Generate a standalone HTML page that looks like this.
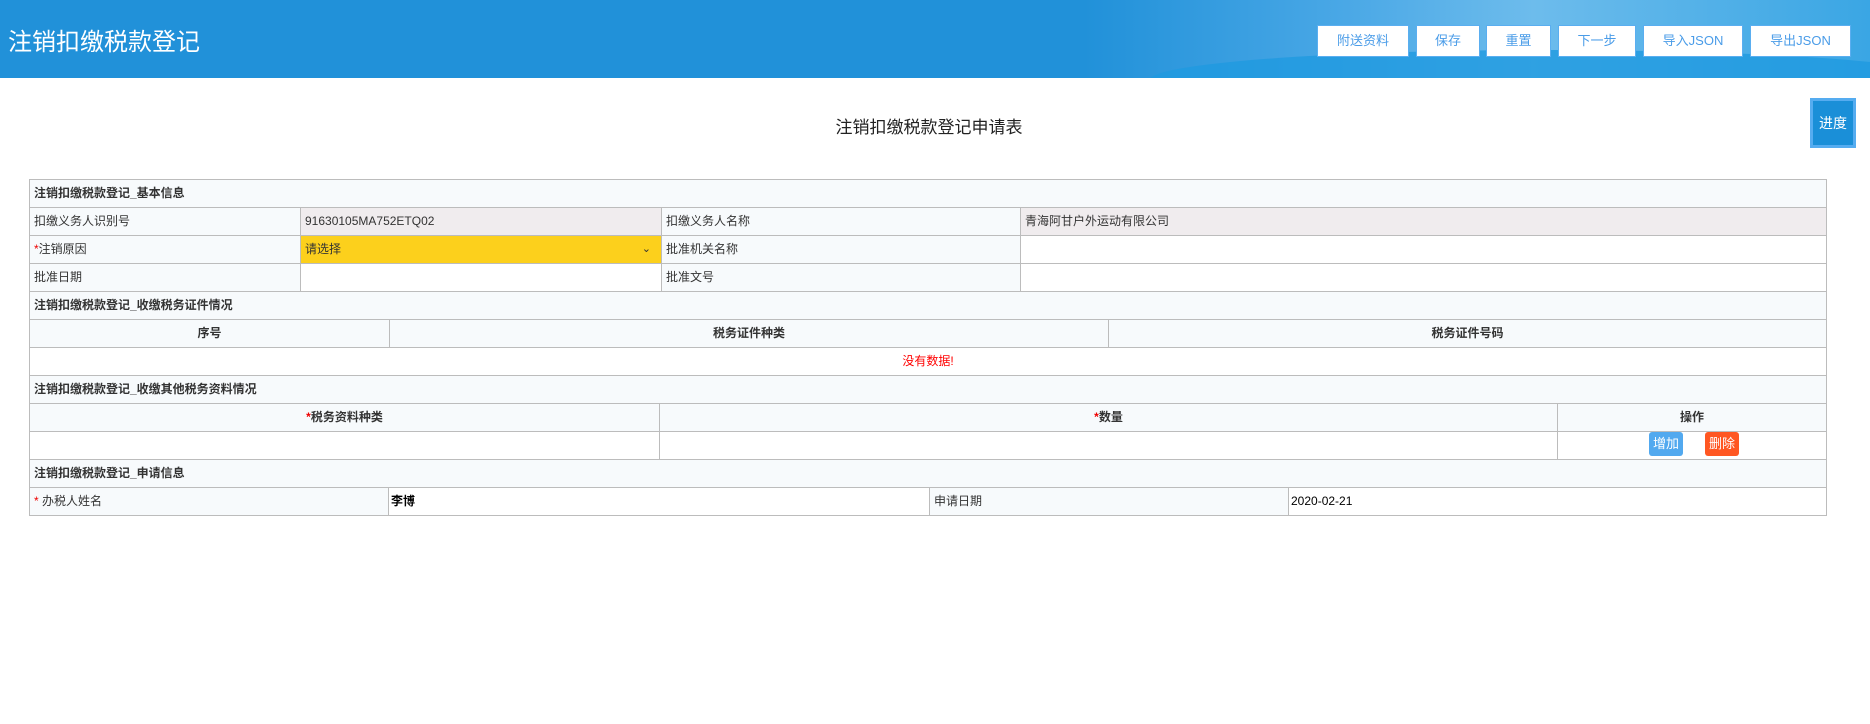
<!DOCTYPE html>
<html><head><meta charset="utf-8">
<style>
*{margin:0;padding:0;box-sizing:border-box}
body{width:1870px;height:724px;background:#fff;font-family:"Liberation Sans","Noto Sans CJK SC",sans-serif;position:relative;overflow:hidden;color:#333}
.hdr{position:absolute;left:0;top:0;width:1870px;height:78px;background:linear-gradient(90deg,#2191d9 0%,#2191d9 58%,#4aa8e6 72%,#6dbcec 82%,#3aa6e4 100%);overflow:hidden}
.wave{position:absolute;left:1150px;top:50px;width:800px;height:60px;background:#1f9ae0;border-radius:50% 50% 0 0;opacity:.8}
.hdr h1{position:absolute;left:8px;top:22px;font-size:24px;font-weight:normal;color:#fff;letter-spacing:0}
.btn{position:absolute;top:25px;height:32px;background:#fff;border:1px solid #5aaef0;color:#4a9ce8;font-size:13px;text-align:center;line-height:30px}
.prog{position:absolute;left:1810px;top:98px;width:46px;height:50px;background:#1a8fd8;border:3px solid #55acf0;color:#fff;font-size:14px;text-align:center;line-height:44px}
.title{position:absolute;left:0;width:1858px;top:113px;text-align:center;font-size:17px;color:#222}
.c{position:absolute;height:29px;border:1px solid #bcbcbc;font-size:12px;line-height:27px;padding-left:4px;white-space:nowrap;overflow:hidden;color:#333}
.s{background:#f7fafc;font-weight:bold}
.g{background:#f0ecee}
.y{background:#fcd01c}
.f{background:#f7fafc}
.w{background:#fff}
.ctr{text-align:center;padding-left:0;font-weight:bold}
.r{color:#e00}
.b{font-weight:bold;color:#000}
.sb{position:absolute;top:432px;width:34px;height:24px;border-radius:3px;color:#fff;font-size:13px;text-align:center;line-height:24px}
</style></head><body>
<div class="hdr"><div class="wave"></div><h1>注销扣缴税款登记</h1>
<div class="btn" style="left:1317px;width:92px">附送资料</div>
<div class="btn" style="left:1416px;width:64px">保存</div>
<div class="btn" style="left:1486px;width:65px">重置</div>
<div class="btn" style="left:1558px;width:78px">下一步</div>
<div class="btn" style="left:1643px;width:100px">导入JSON</div>
<div class="btn" style="left:1750px;width:101px">导出JSON</div>
</div>
<div class="prog">进度</div>
<div class="title">注销扣缴税款登记申请表</div>

<div class="c s" style="left:29px;top:179px;width:1798px">注销扣缴税款登记_基本信息</div>

<div class="c f" style="left:29px;top:207px;width:272px">扣缴义务人识别号</div>
<div class="c g" style="left:300px;top:207px;width:362px">91630105MA752ETQ02</div>
<div class="c f" style="left:661px;top:207px;width:360px">扣缴义务人名称</div>
<div class="c g" style="left:1020px;top:207px;width:807px">青海阿甘户外运动有限公司</div>

<div class="c f" style="left:29px;top:235px;width:272px"><span class="r">*</span>注销原因</div>
<div class="c y" style="left:300px;top:235px;width:362px">请选择<span style="position:absolute;right:10px;top:0;font-size:11px">&#8964;</span></div>
<div class="c f" style="left:661px;top:235px;width:360px">批准机关名称</div>
<div class="c w" style="left:1020px;top:235px;width:807px"></div>

<div class="c f" style="left:29px;top:263px;width:272px">批准日期</div>
<div class="c w" style="left:300px;top:263px;width:362px"></div>
<div class="c f" style="left:661px;top:263px;width:360px">批准文号</div>
<div class="c w" style="left:1020px;top:263px;width:807px"></div>

<div class="c s" style="left:29px;top:291px;width:1798px">注销扣缴税款登记_收缴税务证件情况</div>
<div class="c f ctr" style="left:29px;top:319px;width:361px">序号</div>
<div class="c f ctr" style="left:389px;top:319px;width:720px">税务证件种类</div>
<div class="c f ctr" style="left:1108px;top:319px;width:719px">税务证件号码</div>
<div class="c w" style="left:29px;top:347px;width:1798px;text-align:center;color:#f00;padding-left:0">没有数据!</div>

<div class="c s" style="left:29px;top:375px;width:1798px">注销扣缴税款登记_收缴其他税务资料情况</div>
<div class="c f ctr" style="left:29px;top:403px;width:631px"><span class="r">*</span>税务资料种类</div>
<div class="c f ctr" style="left:659px;top:403px;width:899px"><span class="r">*</span>数量</div>
<div class="c f ctr" style="left:1557px;top:403px;width:270px">操作</div>
<div class="c w" style="left:29px;top:431px;width:631px"></div>
<div class="c w" style="left:659px;top:431px;width:899px"></div>
<div class="c w" style="left:1557px;top:431px;width:270px"></div>
<div class="sb" style="left:1649px;background:#52a9ef">增加</div>
<div class="sb" style="left:1705px;background:#ff5722">删除</div>

<div class="c s" style="left:29px;top:459px;width:1798px">注销扣缴税款登记_申请信息</div>
<div class="c f" style="left:29px;top:487px;width:360px"><span class="r">*</span> 办税人姓名</div>
<div class="c w b" style="left:388px;top:487px;width:542px;padding-left:2px">李博</div>
<div class="c f" style="left:929px;top:487px;width:360px">申请日期</div>
<div class="c w b" style="left:1288px;top:487px;width:539px;padding-left:2px;font-weight:normal">2020-02-21</div>
</body></html>
